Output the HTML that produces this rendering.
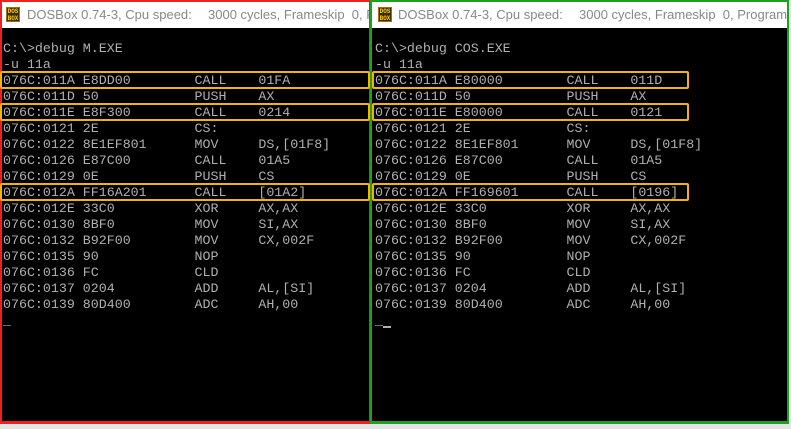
<!DOCTYPE html>
<html><head><style>
body{margin:0;width:791px;height:429px;background:#e4e4e4;position:relative;overflow:hidden;font-family:"Liberation Sans",sans-serif}
.p{position:absolute;top:0;background:#000;box-sizing:border-box}
.tb{position:absolute;left:0;right:0;top:0;height:26px;background:#fff;white-space:nowrap;overflow:hidden;font-size:13px;color:#888;line-height:26px}
.ic{position:absolute;top:5px;width:14px;height:15px;background:#3a2a00;border:1px solid #a07000;color:#ffd000;font:bold 6px/7px "Liberation Mono",monospace;text-align:center;box-sizing:border-box;padding-top:0}
pre{position:absolute;margin:0;font:13.3px/16px "Liberation Mono",monospace;color:#b0b0b0;letter-spacing:0}
.b{position:absolute;border:2px solid #f5b400;border-radius:2px;height:18px;box-sizing:border-box}
.t1{position:absolute;left:25px}
.t2{position:absolute;left:206px}
</style></head><body>
<div class="p" style="left:0;width:371px;height:424px;border:2px solid #f02020;border-bottom-width:3px">
<div class="tb"><div class="ic" style="left:4px">DOS<br>BOX</div><span class="t1">DOSBox 0.74-3, Cpu speed:</span><span class="t2">3000 cycles, Frameskip &nbsp;0, Program</span></div>
</div>
<div class="p" style="left:370px;width:419px;height:424px;border:2px solid #20a020;border-bottom-width:3px">
<div class="tb"><div class="ic" style="left:6px">DOS<br>BOX</div><span class="t1" style="left:26px">DOSBox 0.74-3, Cpu speed:</span><span class="t2" style="left:207px">3000 cycles, Frameskip &nbsp;0, Program</span></div>
</div>
<pre style="left:3px;top:41px">C:\>debug M.EXE
-u 11a
076C:011A E8DD00        CALL    01FA
076C:011D 50            PUSH    AX
076C:011E E8F300        CALL    0214
076C:0121 2E            CS:
076C:0122 8E1EF801      MOV     DS,[01F8]
076C:0126 E87C00        CALL    01A5
076C:0129 0E            PUSH    CS
076C:012A FF16A201      CALL    [01A2]
076C:012E 33C0          XOR     AX,AX
076C:0130 8BF0          MOV     SI,AX
076C:0132 B92F00        MOV     CX,002F
076C:0135 90            NOP
076C:0136 FC            CLD
076C:0137 0204          ADD     AL,[SI]
076C:0139 80D400        ADC     AH,00
_</pre>
<pre style="left:375px;top:41px">C:\>debug COS.EXE
-u 11a
076C:011A E80000        CALL    011D
076C:011D 50            PUSH    AX
076C:011E E80000        CALL    0121
076C:0121 2E            CS:
076C:0122 8E1EF801      MOV     DS,[01F8]
076C:0126 E87C00        CALL    01A5
076C:0129 0E            PUSH    CS
076C:012A FF169601      CALL    [0196]
076C:012E 33C0          XOR     AX,AX
076C:0130 8BF0          MOV     SI,AX
076C:0132 B92F00        MOV     CX,002F
076C:0135 90            NOP
076C:0136 FC            CLD
076C:0137 0204          ADD     AL,[SI]
076C:0139 80D400        ADC     AH,00
_</pre>
<div style="position:absolute;left:383px;top:326px;width:8px;height:2px;background:#b0b0b0"></div>
<div class="b" style="left:0;top:71px;width:370px"></div>
<div class="b" style="left:0;top:103px;width:370px"></div>
<div class="b" style="left:0;top:183px;width:370px"></div>
<div class="b" style="left:372px;top:71px;width:317px"></div>
<div class="b" style="left:372px;top:103px;width:317px"></div>
<div class="b" style="left:372px;top:183px;width:317px"></div>
</body></html>
